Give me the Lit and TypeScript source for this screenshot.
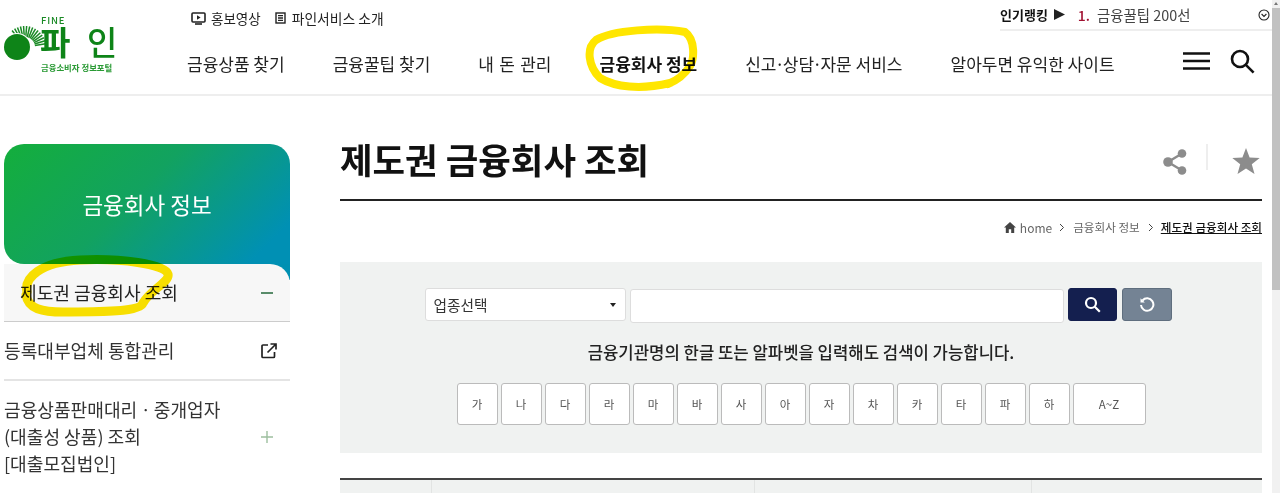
import { LitElement, html, css, svg } from "lit";
import { customElement } from "lit/decorators.js";

const rays = Array.from({ length: 15 }, (_, i) => {
  const a = (-128 + i * 8.5) * Math.PI / 180;
  const cx = 25, cy = 47;
  return svg`<line x1=${cx + 10 * Math.cos(a)} y1=${cy + 10 * Math.sin(a)} x2=${cx + 21 * Math.cos(a)} y2=${cy + 21 * Math.sin(a)} stroke="#1a8a25" stroke-width="1.5"/>`;
});

@customElement("app-root")
export class AppRoot extends LitElement {
  static styles = css`
    :host { display: block; position: relative; width: 1280px; height: 493px; overflow: hidden; background: #fff; color: #222; font-family: "Noto Sans CJK KR", "Noto Sans", sans-serif; }
    * { box-sizing: border-box; }
    button { font-family: inherit; }
    header { display: flex; height: 96px; border-bottom: 2px solid #eee; }
    .logo { width: 187px; flex: none; }
    .logo svg { display: block; }
    .hmain { flex: 1; display: flex; flex-direction: column; }
    .top { display: flex; height: 30px; align-items: flex-start; padding-left: 4px; }
    .util { display: flex; align-items: center; gap: 5px; font-size: 13.5px; line-height: 16px; color: #222; margin-top: 10px; margin-right: 14px; }
    .util + .util { font-size: 13.8px; gap: 6px; }
    .rank { margin-left: auto; margin-right: 8px; width: 272px; height: 31px; border-bottom: 2px solid #eee; display: flex; align-items: center; font-size: 13px; position: relative; }
    .rank b { font-weight: 700; color: #111; }
    .rank .tri { margin: 0 13px 0 6px; }
    .rank .num { color: #a01030; font-weight: 500; margin-right: 7px; font-size: 14px; }
    .rank .t { color: #444; font-size: 14.4px; }
    .rank svg.c { margin-left: auto; margin-right: 2px; }
    nav { display: flex; align-items: center; gap: 48px; margin-top: 8px; height: 50px; font-size: 17px; color: #222; }
    nav .on { font-weight: 700; color: #111; }
    nav .sp { word-spacing: 1.5px; }
    nav .d { margin: 0 -1.6px; }
    nav .icons { margin-left: auto; margin-right: 25px; display: flex; align-items: center; gap: 20px; margin-top: -4px; }
    nav svg { display: block; }
    main { display: flex; padding-left: 4px; padding-top: 48px; }
    aside { width: 286px; flex: none; }
    .banner { position: relative; height: 120px; border-radius: 20px 20px 0 20px; background: linear-gradient(135deg, #14ae3c 0%, #12a260 45%, #0090b4 90%); display: flex; align-items: center; justify-content: center; color: #fff; font-size: 22.5px; }
    .banner::after { content: ""; position: absolute; right: 0; top: 100%; width: 24px; height: 16px; background: #0090b2; }
    .item { display: flex; align-items: center; justify-content: space-between; border-bottom: 2px solid #e4e4e4; font-size: 18.1px; color: #333; line-height: 27px; padding-right: 13px; height: 59px; }
    .item.first { background: #f7f7f7; border-radius: 0 20px 0 0; position: relative; padding: 0 16px; border-bottom: 1px solid #ccc; color: #222; height: 58px; }
    .item.tall { height: 111px; border-bottom: none; padding-right: 16px; }
    .content { width: 922px; margin-left: 50px; }
    .titlebar { height: 57px; border-bottom: 2px solid #222; display: flex; align-items: flex-start; justify-content: space-between; }
    h1 { margin: 0; font-size: 35.4px; font-weight: 700; line-height: 30px; color: #111; }
    .actions { display: flex; align-items: flex-start; margin-right: 2px; }
    .actions i { display: block; width: 2px; height: 26px; background: #eee; margin: 0 24px 0 19px; }
    .actions .sh { margin-top: 5px; }
    .actions .st { margin-top: 4px; }
    .crumb { display: flex; justify-content: flex-end; align-items: center; height: 51px; padding-top: 1px; font-size: 11.6px; color: #666; }
    .crumb .home { display: flex; align-items: center; gap: 4px; font-size: 12px; margin-right: 7px; }
    .crumb .sep { margin: 0 8px; }
    .crumb u { color: #111; font-weight: 500; margin-left: 7px; }
    .panel { margin-top: 10px; height: 191px; background: #f0f2f1; padding-top: 26px; display: flex; flex-direction: column; align-items: center; }
    .form { display: flex; align-items: flex-start; margin-right: 6px; }
    .select { width: 201px; height: 33px; background: #fff; border: 1px solid #ddd; border-radius: 3px; display: flex; align-items: center; justify-content: space-between; padding: 0 9px 0 8px; font-size: 14.7px; color: #333; }
    .caret { width: 0; height: 0; border-left: 3px solid transparent; border-right: 3px solid transparent; border-top: 4px solid #222; }
    .input { width: 434px; height: 34px; margin: 1px 4px 0; background: #fff; border: 1px solid #ddd; border-radius: 3px; }
    .btn { width: 49px; height: 33px; border: 1px solid #141f4f; border-radius: 3px; background: #141f4f; display: flex; align-items: center; justify-content: center; padding: 0; }
    .btn.re { width: 50px; background: #748394; border-color: #5f6e7e; margin-left: 5px; }
    .help { margin-top: 18px; height: 22px; font-size: 16.7px; line-height: 22px; font-weight: 500; color: #222; white-space: nowrap; }
    .keys { display: flex; gap: 3px; margin-top: 20px; }
    .keys button { width: 41px; height: 42px; padding: 0; background: #fff; border: 1px solid #bbb; border-radius: 3px; font-size: 11.5px; color: #555; }
    .keys button.wide { width: 73px; }
    .table { margin-top: 25px; border-top: 2px solid #444; display: grid; grid-template-columns: 92px 323px 277px 1fr; height: 40px; }
    .table div { background: #f0f2f1; border-right: 1px solid #e2e4e3; }
    .table div:last-child { border-right: none; }
    .hl { position: absolute; left: 0; top: 0; pointer-events: none; mix-blend-mode: multiply; }
    .sb { position: absolute; right: 0; top: 0; width: 8px; height: 493px; background: #f1f1f1; }
    .sb div { position: absolute; left: 0; right: 0; top: 8px; height: 282px; background: #c1c1c1; }
    .sb::before { content: ""; position: absolute; left: 2px; top: 2px; border-left: 2px solid transparent; border-right: 2px solid transparent; border-bottom: 3px solid #777; }
  `;

  render() {
    const keys = ["가", "나", "다", "라", "마", "바", "사", "아", "자", "차", "카", "타", "파", "하"];
    return html`
      <header>
        <div class="logo">
          <svg width="130" height="80" viewBox="0 0 130 80">
            ${rays}
            <circle cx="17" cy="47" r="14" fill="#fff"/>
            <circle cx="17" cy="47" r="13" fill="#0e8418"/>
            <text x="41" y="24" font-size="9.500" font-weight="500" letter-spacing="0.8" fill="#1a8a25">FINE</text>
            <text x="40" y="55" font-size="33" font-weight="700" fill="#0e8418">파</text>
            <text x="87" y="55" font-size="33" font-weight="500" fill="#0e8418">인</text>
            <text x="41" y="71" font-size="8.400" font-weight="700" fill="#2a9a35">금융소비자 정보포털</text>
          </svg>
        </div>
        <div class="hmain">
          <div class="top">
            <div class="util">
              <svg width="15" height="13" viewBox="0 0 15 13" fill="none" stroke="#222" stroke-width="1.600"><rect x="1" y="1" width="13" height="9" rx="1"/><path d="M6 3.300v4.400l3.600-2.200z" fill="#222" stroke="none"/><path d="M4 12h7"/></svg>
              <span>홍보영상</span>
            </div>
            <div class="util">
              <svg width="11" height="12" viewBox="0 0 11 12" fill="none" stroke="#222" stroke-width="1.400"><rect x="1" y="1" width="9" height="10"/><path d="M3 3.600h5M3 6h5M3 8.400h5"/></svg>
              <span>파인서비스 소개</span>
            </div>
            <div class="rank">
              <b>인기랭킹</b>
              <svg class="tri" width="11" height="11" viewBox="0 0 11 11"><path d="M0 0l11 5.500L0 11z" fill="#222"/></svg>
              <span class="num">1.</span><span class="t">금융꿀팁 200선</span>
              <svg class="c" width="12" height="12" viewBox="0 0 12 12" fill="none" stroke="#222" stroke-width="1.100"><circle cx="6" cy="6" r="5"/><path d="M3.600 5l2.400 2.400L8.400 5"/></svg>
            </div>
          </div>
          <nav>
            <span>금융상품 찾기</span><span>금융꿀팁 찾기</span><span class="sp">내 돈 관리</span>
            <span class="on">금융회사 정보</span><span>신고<span class="d">·</span>상담<span class="d">·</span>자문 서비스</span><span>알아두면 유익한 사이트</span>
            <div class="icons">
              <svg width="27" height="18" viewBox="0 0 27 18"><path d="M0 1.500h27M0 9h27M0 16.500h27" stroke="#111" stroke-width="2.600"/></svg>
              <svg width="25" height="25" viewBox="0 0 25 25" fill="none" stroke="#111" stroke-width="2.600"><circle cx="10" cy="10" r="8"/><path d="M15.600 15.600l8 8"/></svg>
            </div>
          </nav>
        </div>
      </header>
      <main>
        <aside>
          <div class="banner">금융회사 정보</div>
          <div class="item first"><span>제도권 금융회사 조회</span>
            <svg width="14" height="14" viewBox="0 0 14 14"><path d="M1 7h12" stroke="#2f6f45" stroke-width="1.600"/></svg>
          </div>
          <div class="item"><span>등록대부업체 통합관리</span>
            <svg width="16" height="16" viewBox="0 0 16 16" fill="none" stroke="#222" stroke-width="1.700"><path d="M7 2H2a1 1 0 0 0-1 1v10.500a1 1 0 0 0 1 1h10.500a1 1 0 0 0 1-1V9M6.500 9.500L14.500 1.500M9.500 1h5.500v5.500"/></svg>
          </div>
          <div class="item tall"><span>금융상품판매대리ㆍ중개업자<br />(대출성 상품) 조회<br />[대출모집법인]</span>
            <svg width="14" height="14" viewBox="0 0 14 14"><path d="M1 7h12M7 1v12" stroke="#9dbf9f" stroke-width="1.400"/></svg>
          </div>
        </aside>
        <section class="content">
          <div class="titlebar">
            <h1>제도권 금융회사 조회</h1>
            <div class="actions">
              <svg class="sh" width="24" height="26" viewBox="0 0 24 26"><path d="M19 4.500L5 13l14 8.500" fill="none" stroke="#8c8c8c" stroke-width="2.400"/><circle cx="19" cy="4.500" r="4.300" fill="#8c8c8c"/><circle cx="5" cy="13" r="4.800" fill="#8c8c8c"/><circle cx="19" cy="21.500" r="4.300" fill="#8c8c8c"/></svg>
              <i></i>
              <svg class="st" width="28" height="26" viewBox="0 0 28 26"><path d="M14 0l3.600 9.400 10.100.5-7.900 6.300 2.700 9.800L14 20.400 5.500 26l2.700-9.800L.3 9.900l10.100-.5z" fill="#8c8c8c"/></svg>
            </div>
          </div>
          <div class="crumb">
            <span class="home"><svg width="12" height="11" viewBox="0 0 12 11"><path d="M6 0L0 5.500h1.800V11h3V7.300h2.400V11h3V5.500H12z" fill="#444"/></svg>home</span>
            <svg width="6" height="9" viewBox="0 0 6 9" fill="none" stroke="#444" stroke-width="1"><path d="M1 1l3.500 3.500L1 8"/></svg>
            <span class="sep">금융회사 정보</span>
            <svg width="6" height="9" viewBox="0 0 6 9" fill="none" stroke="#444" stroke-width="1"><path d="M1 1l3.500 3.500L1 8"/></svg>
            <u>제도권 금융회사 조회</u>
          </div>
          <div class="panel">
            <div class="form">
              <div class="select"><span>업종선택</span><span class="caret"></span></div>
              <div class="input"></div>
              <button class="btn" aria-label="검색"><svg width="17" height="17" viewBox="0 0 17 17" fill="none" stroke="#fff" stroke-width="2.200"><circle cx="7" cy="7" r="5"/><path d="M10.800 10.800l5 5"/></svg></button>
              <button class="btn re" aria-label="초기화"><svg width="16" height="16" viewBox="0 0 16 16" fill="none" stroke="#fff" stroke-width="2"><path d="M3.500 3.500A6.200 6.200 0 1 1 2 8"/><path d="M1.500 1.200v4.300h4.300z" fill="#fff" stroke="none"/></svg></button>
            </div>
            <div class="help">금융기관명의 한글 또는 알파벳을 입력해도 검색이 가능합니다.</div>
            <div class="keys">
              ${keys.map((k) => html`<button>${k}</button>`)}
              <button class="wide">A~Z</button>
            </div>
          </div>
          <div class="table"><div></div><div></div><div></div><div></div></div>
        </section>
      </main>
      <svg class="hl" width="1280" height="493" viewBox="0 0 1280 493" fill="none" stroke="#ffe600" stroke-linecap="round" stroke-linejoin="round">
        <path stroke-width="8" d="M670 83C640 90 615 87 600 78C588 66 586 48 596 40C612 30 660 27 685 32C696 40 694 60 690 66C685 74 678 80 668 84"/>
        <path stroke-width="9" d="M27 292C24 278 40 262 80 260C120 258 165 264 168 274C170 282 150 290 143 303C140 312 100 312 70 312C40 313 28 308 26 295"/>
      </svg>
      <div class="sb"><div></div></div>
    `;
  }
}
